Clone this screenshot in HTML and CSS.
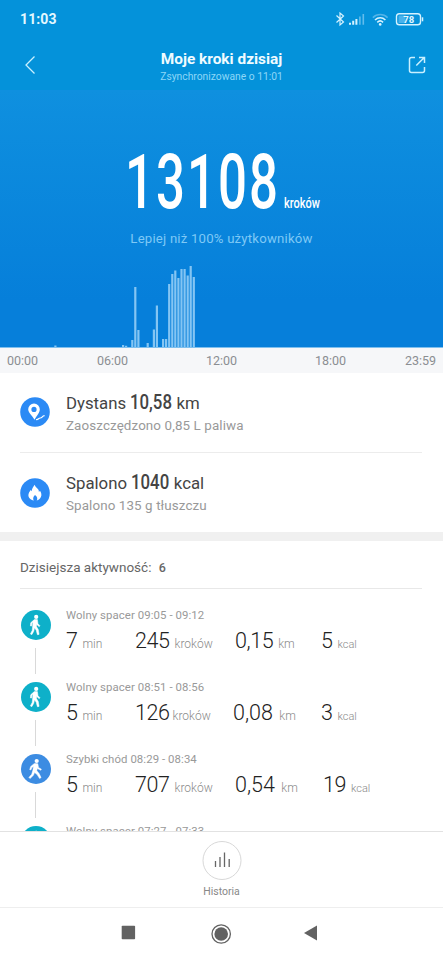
FILE: index.html
```
<!DOCTYPE html>
<html lang="pl">
<head>
<meta charset="utf-8">
<title>Moje kroki dzisiaj</title>
<link rel="stylesheet" href="styles.css">
</head>
<body>
<svg class="defs" aria-hidden="true">
  <symbol id="walk" viewBox="0 0 30 30">
    <circle cx="15.2" cy="6.9" r="2.1" fill="#fff"/>
    <path d="M13.3 9.6h3.1l.6 4.1 2 2.1-.8.9-2.5-2.2-.2 2.1 1.8 3 .8 4.8-1.7.3-1.2-4.5-1.7-2.4-.7 3.5-2 3.4-1.4-.8 1.8-3.5.5-4.6.2-3.5-1 1.3-.3 2.5-1.2-.2.3-3.1z" fill="#fff" stroke="#fff" stroke-width=".5"/>
  </symbol>
  <symbol id="fast" viewBox="0 0 30 30">
    <circle cx="15.7" cy="7" r="2.1" fill="#fff"/>
    <path d="M13.4 9.4l3.4.3.7 3.7 2.9 1.8-.6 1.1-3.5-1.8-.5 2.3 2.3 2.7 2 4.1-1.5.9-2.5-3.9-2.5-2.1-1.2 2.8-3.3 3.3-1.2-1.2 2.8-3.1 1.2-4.2.6-3.5-1.6 1-1 2.4-1.2-.4 1-3.1z" fill="#fff" stroke="#fff" stroke-width=".5"/>
  </symbol>
</svg>
<div class="hero">
  <div class="top">
    <div class="status">
      <span class="clock">11:03</span>
      <svg class="sysicons" width="92" height="16" viewBox="0 0 92 16" fill="none">
        <path d="M-1 4.500l7 6.500-3.500 3V2l3.500 3-7 6.500" stroke="#d5f2ff" stroke-width="1.200" transform="translate(1.500 0)"/>
        <path d="M14 13.800v-2M17.200 13.800v-4M20.400 13.800V8" stroke="#d5f2ff" stroke-width="2"/>
        <path d="M23.900 13.800V5.500M27.300 13.800V3" stroke="#62bcec" stroke-width="1.600"/>
        <path d="M36.800 6.600c4.200-4.100 10.600-4.100 14.800 0" stroke="#54b4e8" stroke-width="1.500"/>
        <path d="M39 9c3.100-3 7.400-3 10.400 0M41.300 11.300c1.800-1.700 4-1.700 5.800 0" stroke="#d5f2ff" stroke-width="1.600"/>
        <circle cx="44.200" cy="13.400" r="1.300" fill="#d5f2ff"/>
        <rect x="60.500" y="2.700" width="24" height="11" rx="2.800" stroke="#d5f2ff" stroke-width="1.400"/>
        <path d="M62.500 4.500h7v7.500h-7z" fill="#48b2ec"/>
        <path d="M86.500 6.300v4" stroke="#d5f2ff" stroke-width="1.500"/>
        <text x="72.800" y="11.700" text-anchor="middle" class="battery">78</text>
      </svg>
    </div>
    <div class="appbar">
      <svg width="12" height="20" viewBox="0 0 12 20" fill="none" stroke="#c9f0ff" stroke-width="1.300"><path d="M10.500 1.500L2 10l8.500 8.500"/></svg>
      <div class="titles"><h1>Moje kroki dzisiaj</h1><p>Zsynchronizowane o 11:01</p></div>
      <svg width="18" height="18" viewBox="0 0 18 18" fill="none" stroke="#c9f0ff" stroke-width="1.500"><path d="M7 1.500H3.500Q1.500 1.500 1.500 3.500V14.500Q1.500 16.500 3.500 16.500H14.500Q16.500 16.500 16.500 14.500V11M8.300 9.500L16 1.700M11 1.500h5.500V7"/></svg>
    </div>
  </div>
  <div class="steps"><span class="count">13108</span><span class="unit">kroków</span></div>
  <p class="better">Lepiej niż 100% użytkowników</p>
  <svg class="chart" width="443" height="82" viewBox="0 0 443 82" fill="#84c5f3">
    <path d="M54.300 80.500h2.200V82h-2.200zM122 80h2.200v2H122zM125 80.700h2.200V82H125zM131.200 75h2.200v7h-2.200zM134.200 22h2.200v60h-2.200zM137.300 65h2.200v17h-2.200zM146.600 78h2.200v4h-2.200zM152.800 64.500h2.200V82h-2.200zM155.800 40.500h2.200V82h-2.200zM162 74h2.200v8H162zM165 74h2.200v8H165zM168.100 19h2.200v63h-2.200zM171.200 9h2.200v73h-2.200zM174.200 5.500h2.200V82h-2.200zM177.300 13h2.200v69h-2.200zM180.400 4h2.200v78h-2.200zM183.500 4h2.200v78h-2.200zM186.600 10.500h2.200V82h-2.200zM189.600 1h2.200v81h-2.200zM192.700 12h2.200v70h-2.200z"/>
  </svg>
</div>
<div class="axis"><span>00:00</span><span>06:00</span><span>12:00</span><span>18:00</span><span>23:59</span></div>
<section class="stats">
  <div class="stat">
    <svg width="30" height="30" viewBox="0 0 30 30"><circle cx="15" cy="15" r="14.800" fill="#2b8af5"/><path fill-rule="evenodd" d="M14 6.500a5.800 5.800 0 0 1 5.800 5.800c0 3.700-3 6-5.300 10.500C12.200 18.500 8.200 16 8.200 12.300A5.800 5.800 0 0 1 14 6.500zm0 3.300a2.600 2.600 0 1 0 0 5.200 2.600 2.600 0 0 0 0-5.200z" fill="#fff"/><path d="M16 22.500c2.700.5 2.200-1.500 4.300-1.500 2 0 1.500-2 4.300-2.300" fill="none" stroke="#fff" stroke-width="1.200"/></svg>
    <div><p class="main">Dystans <b class="n1">10,58</b> km</p><p class="sub">Zaoszczędzono 0,85 L paliwa</p></div>
  </div>
  <div class="stat">
    <svg width="30" height="30" viewBox="0 0 30 30"><circle cx="15" cy="15" r="14.800" fill="#2b8af5"/><path d="M14.700 6.800c.7 3.300 4.500 3.700 4.200 7.200l1.100-1.200c1.300 2 1.900 4.100.9 6.300-.8 1.900-2.300 3-4.200 3.500 1.200-1.800.6-3.700-1.700-5.500-1.700 1.800-2.500 3.700-1.200 5.500-3.300-.5-5.500-2.700-5.400-5.500.1-2.300 1.300-3.500 2.200-5.200l1 1.300c.4-2.600 1.600-4.600 3.100-6.400z" fill="#fff"/></svg>
    <div><p class="main">Spalono <b class="n2">1040</b> kcal</p><p class="sub">Spalono 135 g tłuszczu</p></div>
  </div>
</section>
<section class="activity">
  <h2>Dzisiejsza aktywność: <b>6</b></h2>
  <div class="item">
    <div class="rail"><svg class="slow" width="30" height="30"><use href="#walk"/></svg><i></i></div>
    <div class="info"><p>Wolny spacer 09:05 - 09:12</p><div class="vals"><span><b>7</b> min</span><span><b>245</b> kroków</span><span class="km"><b>0,15</b> km</span><span><b>5</b> <small>kcal</small></span></div></div>
  </div>
  <div class="item">
    <div class="rail"><svg class="slow" width="30" height="30"><use href="#walk"/></svg><i></i></div>
    <div class="info"><p>Wolny spacer 08:51 - 08:56</p><div class="vals"><span><b>5</b> min</span><span class="tight"><b>126</b> kroków</span><span class="loose"><b>0,08</b> km</span><span><b>3</b> <small>kcal</small></span></div></div>
  </div>
  <div class="item">
    <div class="rail"><svg class="quick" width="30" height="30"><use href="#fast"/></svg><i></i></div>
    <div class="info"><p>Szybki chód 08:29 - 08:34</p><div class="vals"><span><b>5</b> min</span><span><b>707</b> kroków</span><span class="km loose"><b>0,54</b> km</span><span class="wide"><b>19</b> <small>kcal</small></span></div></div>
  </div>
  <div class="item">
    <div class="rail"><svg class="slow" width="30" height="30"><use href="#walk"/></svg></div>
    <div class="info"><p>Wolny spacer 07:27 - 07:33</p></div>
  </div>
</section>
<footer class="history">
  <svg width="40" height="40" viewBox="0 0 40 40" fill="none"><circle cx="20" cy="19.500" r="19" stroke="#d8d8d8"/><path d="M13.500 26v-6M18 26V16M22.500 26V11.500M27.200 26v-8" stroke="#666" stroke-width="1.300"/></svg>
  <span>Historia</span>
</footer>
<nav>
  <svg width="443" height="52" viewBox="0 0 443 52" fill="#626262"><rect x="121.700" y="17.800" width="13.400" height="13.500" rx=".8"/><circle cx="221.200" cy="26" r="6.800"/><circle cx="221.200" cy="26" r="9.200" fill="none" stroke="#626262" stroke-width="1.300"/><path d="M304 25l13-7.500v15z"/></svg>
</nav>
</body>
</html>
```
FILE: styles.css
```
* { box-sizing: border-box; }
body { margin: 0; width: 443px; height: 960px; overflow: hidden; display: flex; flex-direction: column; background: #fff; font-family: Roboto, "Liberation Sans", sans-serif; color: #444; }
h1, h2, p { margin: 0; font-weight: 400; }
.defs { position: absolute; width: 0; height: 0; }
.hero { height: 348px; background: linear-gradient(#0f90df 90px, #067fda 300px); border-bottom: 1px solid #7fc0ee; display: flex; flex-direction: column; align-items: center; flex: none; }
.top { width: 100%; height: 90px; background: #0492da; flex: none; }
.status { height: 38px; padding: 0 15px 0 20px; display: flex; justify-content: space-between; align-items: center; color: #e3f8ff; }
.clock { font-size: 14px; font-weight: 700; letter-spacing: 0.1px; }
.sysicons { margin-top: -1px; overflow: visible; }
.battery { font-size: 9.500px; font-weight: 700; fill: #e3f8ff; }
.appbar { height: 52px; padding: 0 17px 0 24px; display: flex; justify-content: space-between; align-items: center; }
.appbar > svg { margin-bottom: -1px; }
.titles { text-align: center; padding-top: 5px; margin-right: 1px; }
h1 { font-size: 15.400px; line-height: 19px; font-weight: 700; color: #f0fbff; white-space: nowrap; }
.titles p { font-size: 10.300px; line-height: 15px; color: #8dd7f8; letter-spacing: 0; }
.steps { width: 195px; height: 76px; margin: 54px 0 0 2px; color: #fff; display: flex; align-items: baseline; }
.count { width: 159px; font-size: 75.500px; line-height: 76px; font-weight: 500; letter-spacing: 3px; transform: scaleX(.675); transform-origin: left; white-space: nowrap; }
.unit { font-size: 14.500px; font-weight: 500; transform: scaleX(.76); transform-origin: left; }
.better { font-size: 13.200px; line-height: 18px; margin-top: 10px; color: #7fc9f6; letter-spacing: .2px; }
.chart { margin-top: auto; display: block; flex: none; }
.axis { height: 25px; padding: 0 7px; background: #f6f7f9; color: #8b8e92; font-size: 12.500px; display: grid; grid-template-columns: 90px 109px 109px 90px auto; align-items: center; flex: none; white-space: nowrap; }
.stats { height: 168px; padding: 0 21px; border-bottom: 9px solid #f0f0f0; flex: none; }
.stat { height: 80px; display: flex; align-items: center; gap: 16px; margin-left: -1px; }
.stat > svg { margin-top: -1px; }
.stat > div { padding-top: 2px; }
.stat:first-child { border-bottom: 1px solid #ececec; }
.main { font-size: 16.800px; line-height: 24px; color: #444; }
.main b { display: inline-block; font-size: 20px; font-weight: 500; transform: scaleX(.84); transform-origin: left; line-height: 22px; }
.n1 { margin-right: -8px; }
.n2 { margin-right: -7px; }
.sub { font-size: 13.400px; line-height: 22px; color: #999; letter-spacing: .1px; }
.activity { height: 290px; padding: 0 21px 0 20px; overflow: hidden; flex: none; }
h2 { height: 48px; line-height: 53px; font-size: 13.500px; color: #666; border-bottom: 1px solid #e8e8e8; }
h2 b { font-size: 12.500px; font-weight: 500; margin-left: 4px; }
.item { height: 72px; display: flex; gap: 16px; }
.item:nth-child(2) { margin-top: 16px; }
.rail { width: 31px; margin-right: -1px; display: flex; flex-direction: column; align-items: center; padding-top: 5px; }
.rail svg { border-radius: 50%; flex: none; }
.slow { background: #0eb0c9; }
.quick { background: #3c8ce2; }
.rail i { width: 1px; height: 26px; margin-top: 8px; background: #d9d9d9; }
.info p { font-size: 11.400px; line-height: 20px; color: #999; letter-spacing: .07px; }
.vals { display: grid; grid-template-columns: 69px 98px 88px auto; align-items: baseline; font-size: 12px; line-height: 32px; font-weight: 300; color: #8a8a8a; white-space: nowrap; }
.vals b { font-size: 21.500px; font-weight: 300; color: #222; letter-spacing: -.4px; margin-right: 2px; }
.vals small { font-size: 11px; }
.vals .km, .wide { padding-left: 2px; }
.vals .loose b { margin-right: 3.500px; letter-spacing: 0; }
.vals .tight b { margin-right: 0; }
.history { height: 77px; border-top: 1px solid #e2e2e2; border-bottom: 1px solid #eee; display: flex; flex-direction: column; align-items: center; padding-top: 9px; flex: none; font-size: 10.500px; line-height: 20px; color: #888; }
.history svg { display: block; flex: none; }
.history span { margin-top: 1px; }
nav { height: 52px; flex: none; }
nav svg { display: block; }
```
